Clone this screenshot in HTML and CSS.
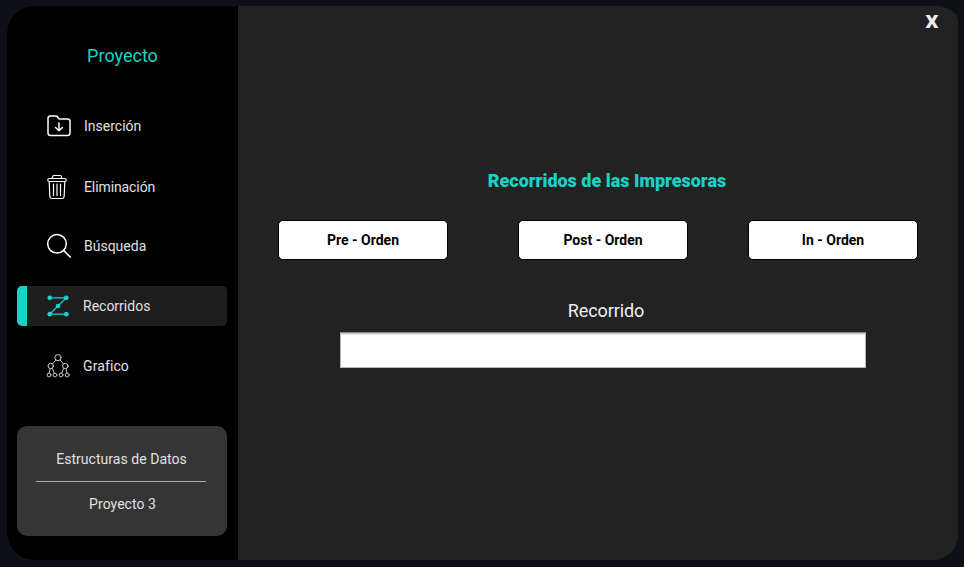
FILE: index.html
```html
<!DOCTYPE html>
<html lang="es">
<head>
<meta charset="utf-8">
<title>Proyecto</title>
<link rel="stylesheet" href="styles.css">
</head>
<body>
<div class="window">
  <aside class="sidebar">
    <h1 class="brand">Proyecto</h1>
    <nav class="menu">
      <a class="item">
        <svg class="icon" viewBox="0 0 26 26"><path d="M2 5.5Q2 3 4.500 3H10q1 0 1.600 1l.8 1.200q.6.8 1.600.8h7.500Q24 6 24 8.500V20q0 2.500-2.500 2.500h-17Q2 22.500 2 20Z" stroke-width="1.500"/><path d="M13 10v7.500M9.600 14.500 13 17.800l3.400-3.300" stroke-width="1.500"/></svg>
        <span>Inserción</span>
      </a>
      <a class="item item-delete">
        <svg class="icon" viewBox="0 0 26 26"><path d="M6.500 4V3q0-1.500 1.500-1.500h6q1.500 0 1.500 1.500v1M3 4.500h16q1.200 0 1.200 1.500t-1.200 1.500H3Q1.800 7.500 1.800 6T3 4.500ZM3.200 7.500l.6 14.500q.2 2.500 2.200 2.500h10q2 0 2.200-2.500l.6-14.500M7.500 10v11.500M11 10v11.500M14.500 10v11.500" stroke-width="1.200"/></svg>
        <span>Eliminación</span>
      </a>
      <a class="item">
        <svg class="icon" viewBox="0 0 26 26"><circle cx="11" cy="10.800" r="9.300" stroke-width="1.500"/><path d="m17.700 17.500 6.500 6.500" stroke-width="1.700"/></svg>
        <span>Búsqueda</span>
      </a>
      <a class="item active">
        <svg class="icon" viewBox="-1 0 26 26"><path d="M2.700 4.800H19.300L2.700 21.200H19.300" stroke-width="1.200"/><g class="dots"><circle cx="2.800" cy="4.800" r="2.400"/><circle cx="19.300" cy="4.800" r="2.400"/><circle cx="11" cy="13" r="2.300"/><circle cx="2.800" cy="21.200" r="2.400"/><circle cx="19.300" cy="21.200" r="2.400"/></g></svg>
        <span>Recorridos</span>
      </a>
      <a class="item item-graph">
        <svg class="icon" viewBox="0 0 26 26"><g stroke-width="1"><circle cx="12" cy="4.700" r="3.100"/><circle cx="4.700" cy="13" r="2.700"/><circle cx="19.300" cy="13" r="2.700"/><circle cx="3" cy="22" r="1.900"/><circle cx="8.900" cy="22" r="1.900"/><circle cx="15.100" cy="22" r="1.900"/><circle cx="21.200" cy="22" r="1.900"/><path d="M9.900 7 6.500 11M14.100 7l3.400 4M4 15.600 3.200 20M6.300 15.200 8.300 20.200M17.700 15.200l-2 5M20.100 15.600l.8 4.400"/></g></svg>
        <span>Grafico</span>
      </a>
    </nav>
    <section class="about">
      <p>Estructuras de Datos</p>
      <hr>
      <p class="number">Proyecto 3</p>
    </section>
  </aside>
  <main class="content">
    <button class="close">X</button>
    <h2 class="title">Recorridos de las Impresoras</h2>
    <div class="actions">
      <button class="btn">Pre - Orden</button>
      <button class="btn">Post - Orden</button>
      <button class="btn">In - Orden</button>
    </div>
    <label class="label" for="result">Recorrido</label>
    <input class="field" id="result" type="text">
  </main>
</div>
</body>
</html>
```
FILE: styles.css
```css
* { box-sizing: border-box; }
body {
  margin: 0;
  height: 567px;
  padding: 6px 6px 7px 7px;
  background: #0d1117;
  font-family: Roboto, sans-serif;
  font-variant-ligatures: none;
  color: #e1e1e1;
  overflow: hidden;
}
.window {
  display: flex;
  height: 554px;
  background: #222;
  border-radius: 27px 22px 25px 27px / 27px 15px 25px 27px;
  overflow: hidden;
}
.sidebar {
  width: 231px;
  padding: 38px 11px 24px 10px;
  background: #000;
}
.brand {
  margin: 0 0 38px;
  padding-left: 1px;
  font-size: 18px;
  line-height: 24px;
  font-weight: 400;
  text-align: center;
  color: #1ad1c5;
}
.menu { display: grid; gap: 20px; }
.item {
  display: flex;
  align-items: center;
  height: 40px;
  padding-left: 29px;
  font-size: 14px;
  border-radius: 5px;
}
.icon {
  width: 26px;
  height: 26px;
  margin-right: 12px;
  fill: none;
  stroke: #fff;
  stroke-linecap: round;
  stroke-linejoin: round;
}
.item-delete { padding-top: 2px; letter-spacing: -0.1px; }
.item-graph .icon, .active .icon { margin-right: 11px; }
.item-graph { letter-spacing: 0.1px; }
.item-graph .icon { stroke: #c8c8c8; }
.active {
  padding-left: 19px;
  border-left: 10px solid #1ad1c5;
  background: #1e1e1e;
}
.active .icon { stroke: #1ad1c5; }
.dots { fill: #1ad1c5; stroke: none; }
.about {
  height: 110px;
  margin-top: 40px;
  padding: 22px 20px 0 19px;
  background: #353535;
  border-radius: 10px;
  font-size: 14px;
  line-height: 22px;
  letter-spacing: 0.04px;
  text-align: center;
}
.about p { margin: 0; }
.about .number { padding-left: 2px; }
.about hr {
  width: 170px;
  height: 1px;
  margin: 11px 0;
  border: 0;
  background: #a7afb8;
}
.content {
  flex: 1;
  display: flex;
  flex-direction: column;
}
.close {
  align-self: flex-end;
  width: 30px;
  height: 30px;
  margin-right: 11px;
  padding: 0;
  border: 0;
  background: none;
  color: #eee;
  font: 900 18px Roboto, sans-serif;
  transform: scaleX(1.12);
}
.title {
  margin: 133px 0 0;
  padding-left: 18px;
  font-size: 18px;
  line-height: 24px;
  font-weight: 900;
  text-align: center;
  color: #1ad1c5;
}
.actions {
  display: grid;
  grid-template-columns: 240px 230px 170px;
  margin: 27px 0 0 40px;
}
.btn {
  width: 170px;
  height: 40px;
  padding: 0;
  border: 1px solid #000;
  border-radius: 5px;
  background: #fff;
  color: #000;
  font: 700 14px Roboto, sans-serif;
}
.label {
  margin-top: 39px;
  padding-left: 16px;
  font-size: 18px;
  line-height: 24px;
  letter-spacing: -0.08px;
  text-align: center;
  color: #f0f0f0;
}
.field {
  width: 526px;
  height: 36px;
  margin: 9px 0 0 102px;
  border: 1px solid #b5b5b5;
  border-top-color: #888;
  border-radius: 0;
  background: #fff;
  box-shadow: inset 0 1px #ccc, inset 0 2px #e8e8e8;
}
```
